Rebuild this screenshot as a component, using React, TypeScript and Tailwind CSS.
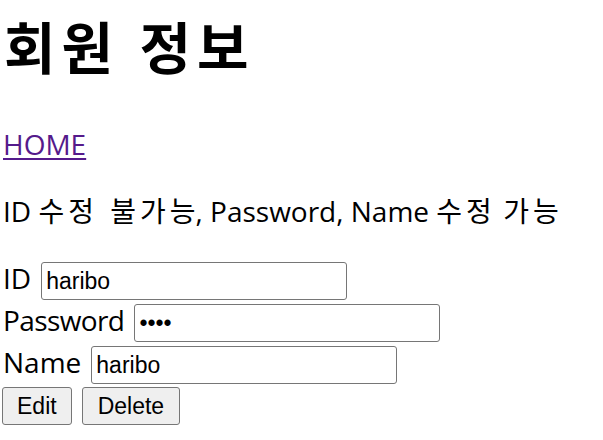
const fontStack = "font-['Open_Sans','Noto_Sans_CJK_KR',sans-serif]";

export default function App() {
  return (
    <div className={`min-h-[440px] bg-white pl-[3px] text-black ${fontStack}`}>
      <h1 className="m-0 pl-[1px] pt-[15px] text-[56px] font-bold leading-[64px] tracking-[6px]">
        회원 정보
      </h1>

      <div className="mt-[45px] text-[28px] leading-[40px]">
        <a href="#" className="text-[#551a8b] underline decoration-2 underline-offset-[3px]">
          HOME
        </a>
      </div>

      <p className="mt-[27px] text-[28px] leading-[40px]">
        ID <Ko>수정</Ko> <Ko className="ml-[5px] mr-[-4px]">불가능</Ko>, Password, Name <Ko>수정</Ko>{" "}
        <Ko>가능</Ko>
      </p>

      <form className="mt-[31px] flex flex-col" onSubmit={(e) => e.preventDefault()}>
        <FieldRow label="ID" type="text" value="haribo" />
        <FieldRow label="Password" type="password" value="1234" className="mt-[4px]" tight />
        <FieldRow label="Name" type="text" value="haribo" className="mt-[4px]" />

        <div className="-ml-px mt-[3px] flex gap-[10px] font-['Liberation_Sans',Arial,sans-serif] text-[23px]">
          <button
            type="submit"
            className="h-[38px] rounded-[3px] border border-[#767676] bg-[#efefef] px-[14px] leading-none"
          >
            Edit
          </button>
          <button
            type="button"
            className="h-[38px] rounded-[3px] border border-[#767676] bg-[#efefef] px-[15px] leading-none"
          >
            Delete
          </button>
        </div>
      </form>
    </div>
  );
}

function Ko({ children, className = "" }: { children: React.ReactNode; className?: string }) {
  return <span className={`tracking-[4px] ${className}`}>{children}</span>;
}

interface FieldRowProps {
  label: string;
  type: string;
  value: string;
  className?: string;
  tight?: boolean;
}

function FieldRow({ label, type, value, className = "", tight = false }: FieldRowProps) {
  return (
    <label className={`flex items-baseline gap-[10px] ${className}`}>
      <span className={`text-[28px] leading-[28px] ${tight ? "tracking-[-0.6px]" : ""}`}>{label}</span>
      <input
        type={type}
        defaultValue={value}
        className="h-[38px] w-[306px] rounded-[3px] border border-[#767676] bg-white pl-[4px] font-['Liberation_Sans',Arial,sans-serif] text-[23px] text-black outline-none"
      />
    </label>
  );
}
